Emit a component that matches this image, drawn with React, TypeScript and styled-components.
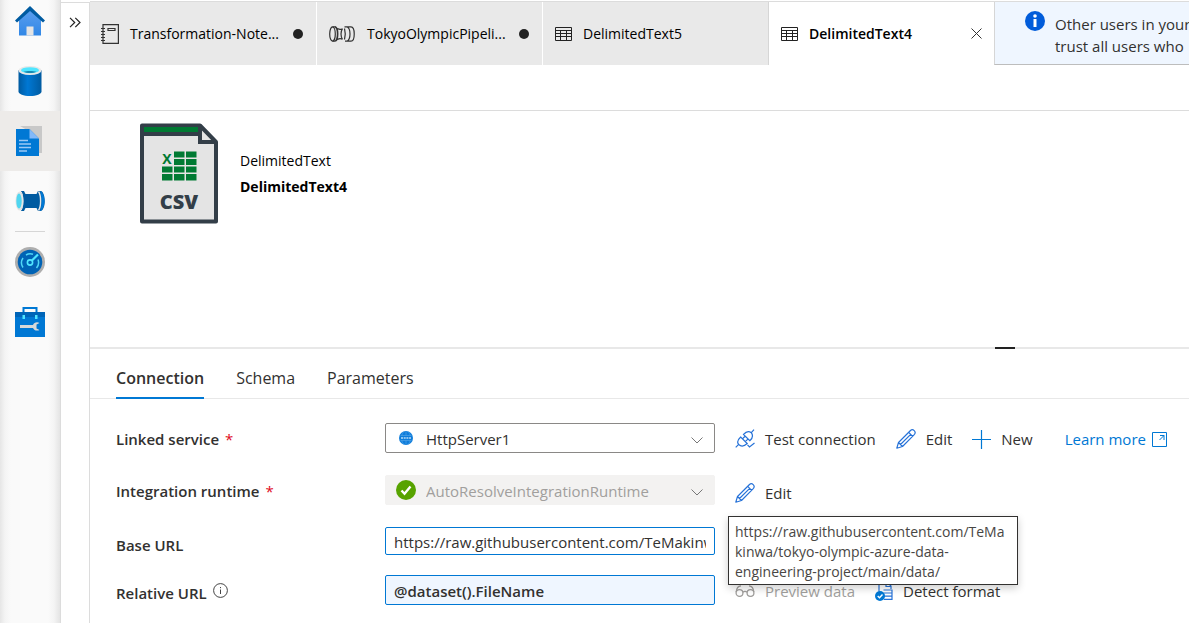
import React from "react";
import styled, { createGlobalStyle, css } from "styled-components";

const GlobalStyle = createGlobalStyle`
  * { box-sizing: border-box; }
  body {
    margin: 0;
    background: #fff;
    color: #323130;
    font-family: "Open Sans", "Noto Sans", sans-serif;
    font-size: 14px;
    line-height: 20px;
  }
  button, input, select { font: inherit; color: inherit; margin: 0; }
  svg { display: block; flex: none; }
`;

const Page = styled.div`
  display: flex;
  min-height: 100vh;
  overflow: hidden;
`;

const Rail = styled.nav`
  flex: 0 0 61px;
  border-right: 1px solid #dcdcdc;
  background: linear-gradient(90deg, #e6e6e6 0, #f4f4f4 5px, #fafafa 11px, #fafafa 48px, #f4f4f4 54px, #e4e4e4 60px);
`;

const RailList = styled.ul`
  list-style: none;
  margin: -9px 0 0;
  padding: 0;
`;

const RailButton = styled.button<{ $active?: boolean }>`
  display: flex;
  align-items: center;
  justify-content: center;
  width: 100%;
  height: 60px;
  padding: 0;
  border: 0;
  background: ${(p) => (p.$active ? "#edebe9" : "transparent")};
`;

const RailDivider = styled.li`
  height: 1px;
  margin: 0 15px;
  background: #d6d6d6;
`;

const Flyout = styled.aside`
  flex: 0 0 29px;
  margin-top: 2px;
  border-top: 1px solid #dcdcdc;
  border-right: 1px solid #dcdcdc;
`;

const ExpandButton = styled.button`
  display: flex;
  justify-content: center;
  width: 100%;
  padding: 14px 0;
  border: 0;
  background: none;
`;

const Main = styled.main`
  flex: 1;
  min-width: 0;
  margin-top: 1px;
  border-top: 1px solid #dcdcdc;
`;

const TabStrip = styled.div`
  display: flex;
  height: 63px;
`;

const FileTab = styled.div<{ $active?: boolean }>`
  flex: 0 0 226px;
  display: flex;
  align-items: center;
  padding: 0 10px;
  color: #000;
  background: ${(p) => (p.$active ? "#fff" : "#e9e9e9")};
  border-left: 1px solid ${(p) => (p.$active ? "#d6d6d6" : "#fff")};
  font-weight: ${(p) => (p.$active ? 600 : 400)};
  &:first-child { border-left: 0; }
`;

const FileTabButton = styled.button`
  flex: 1;
  display: flex;
  align-items: center;
  gap: 10px;
  padding: 0;
  border: 0;
  background: none;
  white-space: nowrap;
`;

const TabGlyph = styled.span<{ $wide?: boolean }>`
  flex: 0 0 ${(p) => (p.$wide ? 30 : 20)}px;
  display: flex;
  justify-content: center;
`;

const UnsavedDot = styled.span`
  width: 10px;
  height: 10px;
  margin-right: 3px;
  border-radius: 50%;
  background: #222;
`;

const CloseButton = styled.button`
  display: flex;
  padding: 2px;
  border: 0;
  background: none;
`;

const Notice = styled.div`
  flex: 1;
  min-width: 0;
  display: flex;
  align-items: flex-start;
  gap: 10px;
  padding: 9px 0 0 30px;
  overflow: hidden;
  background: #eff6ff;
  border-left: 1px solid #d6d6d6;
  border-bottom: 1px solid #bdbdbd;
  font-size: 15px;
  white-space: nowrap;
`;

const NoticeText = styled.p`
  margin: 2px 0 0;
  line-height: 22px;
`;

const CommandBar = styled.div`
  height: 46px;
  border-bottom: 1px solid #dcdcdc;
`;

const Summary = styled.header`
  display: flex;
  align-items: flex-start;
  gap: 22px;
  min-height: 236px;
  padding: 12px 50px;
  color: #000;
`;

const SummaryText = styled.div`
  padding-top: 25px;
  line-height: 26px;
`;

const DatasetName = styled.h1`
  margin: 0;
  font-size: 14px;
  font-weight: 700;
  line-height: 26px;
`;

const Splitter = styled.div`
  display: flex;
  justify-content: flex-end;
  height: 2px;
  padding-right: 174px;
  background: #e8e8e8;
`;

const SplitHandle = styled.button`
  width: 20px;
  height: 2px;
  padding: 0;
  border: 0;
  background: #222;
`;

const SectionTabs = styled.div`
  display: flex;
  gap: 32px;
  height: 50px;
  padding-left: 26px;
  border-bottom: 1px solid #e8e8e8;
`;

const SectionTab = styled.button<{ $active?: boolean }>`
  height: 50px;
  padding: 10px 0 0;
  border: 0;
  border-bottom: 2px solid ${(p) => (p.$active ? "#0078d4" : "transparent")};
  background: none;
  font-size: 16px;
  font-weight: ${(p) => (p.$active ? 600 : 400)};
`;

const Form = styled.form`
  padding: 24px 0 0 26px;
  font-size: 15px;
`;

const Row = styled.div<{ $compact?: boolean }>`
  position: relative;
  display: grid;
  grid-template-columns: 269px 330px 1fr;
  align-items: start;
  min-height: ${(p) => (p.$compact ? 48 : 52)}px;
`;

const Label = styled.label<{ $low?: boolean }>`
  display: flex;
  align-items: center;
  gap: 6px;
  height: 32px;
  margin-top: ${(p) => (p.$low ? 2 : 0)}px;
  font-weight: 600;
`;

const Required = styled.span`
  color: #e00b1c;
  font-weight: 400;
`;

const InfoGlyph = styled.span`
  padding-bottom: 6px;
`;

const SelectBox = styled.div`
  position: relative;
`;

const Select = styled.select`
  appearance: none;
  width: 100%;
  height: 30px;
  padding: 2px 40px 0 40px;
  border: 1px solid #8a8886;
  border-radius: 2px;
  background: #fff;
  &:disabled {
    border-color: #f3f2f1;
    background: #f3f2f1;
    color: #a19f9d;
    opacity: 1;
  }
`;

const glyph = css`
  position: absolute;
  top: 0;
  height: 30px;
  display: flex;
  align-items: center;
  pointer-events: none;
`;

const LeadGlyph = styled.span`
  ${glyph}
  left: 11px;
  width: 20px;
  justify-content: center;
`;

const Chevron = styled.span`
  ${glyph}
  right: 12px;
  padding-top: 4px;
`;

const TextInput = styled.input<{ $expression?: boolean }>`
  width: 100%;
  height: ${(p) => (p.$expression ? 30 : 28)}px;
  padding: 2px 8px 0;
  border: 1px solid #0078d4;
  border-radius: 2px;
  outline: 0;
  background: ${(p) => (p.$expression ? "#eff6ff" : "#fff")};
  font-weight: ${(p) => (p.$expression ? 600 : 400)};
`;

const Actions = styled.div<{ $low?: boolean }>`
  display: flex;
  align-items: center;
  gap: 20px;
  height: 32px;
  margin-top: ${(p) => (p.$low ? 2 : 0)}px;
  padding-left: 20px;
  white-space: nowrap;
`;

const action = css`
  display: flex;
  align-items: center;
  gap: 10px;
  padding: 0;
  border: 0;
  background: none;
`;

const Action = styled.button`
  ${action}
  &:disabled { color: #a19f9d; }
`;

const LearnLink = styled.a`
  ${action}
  gap: 6px;
  margin-left: 12px;
  color: #0078d4;
  text-decoration: none;
`;

const Tooltip = styled.div`
  position: absolute;
  top: -11px;
  left: 612px;
  width: 290px;
  padding: 5px 6px 2px;
  border: 1px solid #323130;
  background: #fff;
  box-shadow: 0 3px 8px rgba(0, 0, 0, 0.2);
  color: #484644;
  font-size: 14px;
  white-space: nowrap;
  z-index: 1;
`;

const HomeIcon = () => (
  <svg width="30" height="30" viewBox="0 0 30 30">
    <defs>
      <linearGradient id="home" x1="0" y1="0" x2="0" y2="1">
        <stop offset="0" stopColor="#5ea0ef" /><stop offset="1" stopColor="#3087e6" />
      </linearGradient>
    </defs>
    <path d="M15 2 4 14v15.5h22V14z" fill="url(#home)" />
    <path d="M15 0 30 14.500 28 16.500 15 5 2 16.500 0 14.500z" fill="#005ba1" />
    <path d="M11.500 20.500h7v9h-7z" fill="#e4e4e4" />
  </svg>
);

const DatabaseIcon = () => (
  <svg width="30" height="30" viewBox="0 0 30 30">
    <defs>
      <linearGradient id="db"><stop offset="0" stopColor="#005ba1" /><stop offset=".4" stopColor="#0078d4" /><stop offset="1" stopColor="#005ba1" /></linearGradient>
    </defs>
    <path d="M3.500 4v21.500c0 2.500 5 4.500 11.500 4.500s11.500-2 11.500-4.500V4z" fill="url(#db)" />
    <ellipse cx="15" cy="4.500" rx="11.500" ry="4.500" fill="#e8e8e8" />
    <ellipse cx="15" cy="4.200" rx="9" ry="3" fill="#50e6ff" />
    <path d="M8.500 5.800c3-1.200 10-1.200 13 0-3 1.600-10 1.600-13 0z" fill="#198ab3" />
  </svg>
);

const DocumentsIcon = () => (
  <svg width="28" height="30" viewBox="0 0 28 30">
    <path d="M4 0h22v27h-8V8z" fill="#c8c8c8" />
    <path d="M0 3h13.500l9.500 9.500V30H0z" fill="#0078d4" />
    <path d="M13.500 3v9.500h9.500z" fill="#83b9f9" />
    <path d="M3 14.500h9M3 18h12M3 21.500h12M3 25h8" stroke="#9cc9f5" strokeWidth="1.300" />
  </svg>
);

const PipelineIcon = () => (
  <svg width="30" height="22" viewBox="0 0 30 22">
    <path d="M6 1h3l1.500 3h11L23 1h3c5 2 5 18 0 20h-3l-1.500-3h-11L9 21H6z" fill="#005ba1" />
    <path d="M25 1c6 2 6 18 0 20 2-5 2-15 0-20z" fill="#0078d4" />
    <ellipse cx="4.500" cy="11" rx="4" ry="9.500" fill="#e4e4e4" />
    <ellipse cx="4" cy="11" rx="2.700" ry="7.500" fill="#50d6f0" />
    <path d="M6 1.500c2.500 3 2.500 16 0 19" fill="none" stroke="#e8e8e8" />
    <path d="M23.500 1.500c2.800 4 2.800 15 0 19" fill="none" stroke="#e8e8e8" strokeWidth="1.400" />
  </svg>
);

const MonitorIcon = () => (
  <svg width="30" height="30" viewBox="0 0 30 30">
    <circle cx="15" cy="15" r="15" fill="#aeaeae" />
    <circle cx="15" cy="15" r="12.300" fill="#0063b5" />
    <path d="M8 20.500a8.500 8.500 0 0 1 0-9.500M11 8a8.500 8.500 0 0 1 7-.7M23 12.500a8.500 8.500 0 0 1-1.500 8.500" fill="none" stroke="#50d6f5" strokeWidth="1.500" />
    <circle cx="15" cy="15.500" r="2.600" fill="none" stroke="#50e6ff" strokeWidth="1.600" />
    <path d="m17 13.500 6-6" stroke="#50e6ff" strokeWidth="2.200" />
  </svg>
);

const ToolboxIcon = () => (
  <svg width="30" height="30" viewBox="0 0 30 30">
    <path d="M8.500 6V1h13v5" fill="none" stroke="#0078d4" strokeWidth="2" />
    <path d="M0 5h30v25H0z" fill="#0078d4" />
    <path d="M0 5h30v5H0z" fill="#0065b8" />
    <path d="M7.500 8h2.500v4H7.500zM20 8h2.500v4H20z" fill="#50e6ff" />
    <path d="M5 18h13c1-2.500 4-3.500 6.500-2l-3 1.500v4l3 1.500c-2.500 1.200-5.500.5-6.500-2H5z" fill="#d8d8d8" />
  </svg>
);

const NotebookIcon = () => (
  <svg width="18" height="20" viewBox="0 0 18 20" fill="none" stroke="#333" strokeWidth="1.200">
    <path d="M2 .6h15.400v18.800H2zM0 4.500h4M0 7.500h4M0 10.500h4M0 13.500h4M0 16.500h4M7 4.500h7v2H7z" />
  </svg>
);

const PipelineOutlineIcon = () => (
  <svg width="26" height="16" viewBox="0 0 26 16" fill="none" stroke="#333" strokeWidth="1.200">
    <ellipse cx="3.500" cy="8" rx="2.800" ry="7.200" />
    <path d="M3.500.8h2.500c3.800 0 3.800 14.400 0 14.400H3.500M6 .8c3.200 2 3.200 12.400 0 14.400M8.500 2.500c1.500 1 3.500 1 5 .2M8.500 13.500c1.500-1 3.500-1 5-.2M13.500 2.700c-2 3-2 7.600 0 10.600M15.500 2.500c1 3.500 1 7.500 0 11M15.500.8h6.500c4.300 0 4.300 14.400 0 14.400h-6M18 .8c4 2 4 12.400 0 14.400" />
  </svg>
);

const TableIcon = () => (
  <svg width="17" height="14" viewBox="0 0 17 14" fill="none" stroke="#222">
    <path d="M.5.5h16v13H.5zM.5 3.500h16M.5 6.500h16M.5 9.500h16M5.500 3.500v10M11.500 3.500v10" />
  </svg>
);

const CsvIcon = () => (
  <svg width="78" height="101" viewBox="0 0 78 101" role="img" aria-label="CSV file">
    <path d="M2 2.500h58L76 19v79.500H2z" fill="#e4e4e4" stroke="#333e48" strokeWidth="4" strokeLinejoin="round" />
    <path d="M4 4h55v5H4z" fill="#007a33" />
    <path d="M3 11h56M60 2.500V19h16" fill="none" stroke="#333e48" strokeWidth="4" />
    <g fill="#007a33">
      <rect x="34" y="28.500" width="10.500" height="6" /><rect x="46" y="28.500" width="10.500" height="6" />
      <rect x="34" y="36" width="10.500" height="6" /><rect x="46" y="36" width="10.500" height="6" />
      <rect x="22" y="43.500" width="10.500" height="6" /><rect x="34" y="43.500" width="10.500" height="6" /><rect x="46" y="43.500" width="10.500" height="6" />
      <rect x="22" y="51" width="10.500" height="6.500" /><rect x="34" y="51" width="10.500" height="6.500" /><rect x="46" y="51" width="10.500" height="6.500" />
    </g>
    <text x="27" y="41" textAnchor="middle" fontSize="14" fontWeight="700" fill="#007a33">X</text>
    <text x="39" y="86" textAnchor="middle" fontSize="20" fontWeight="800" fill="#333e48">CSV</text>
  </svg>
);

const InfoBadge = () => (
  <svg width="20" height="20" viewBox="0 0 20 20">
    <circle cx="10" cy="10" r="10" fill="#015cda" />
    <circle cx="10" cy="5" r="1.800" fill="#fff" />
    <path d="M8.500 8h3v8h-3z" fill="#fff" />
  </svg>
);

const PencilIcon = () => (
  <svg width="20" height="20" viewBox="0 0 20 20" fill="none" stroke="#2672d8" strokeWidth="1.200" strokeLinejoin="round">
    <path d="M.8 19.200 2.500 13.500 14.500 1.500c2.500-2.200 6 1.300 4 3.800L6.500 17.500zM2.500 13.500l4 4M12.700 3.300l4 4M4.500 15.500 14.700 5.300" />
  </svg>
);

const PlugIcon = () => (
  <svg width="20" height="20" viewBox="0 0 20 20" fill="none" stroke="#2672d8" strokeWidth="1.200">
    <path d="m.7 18.300 3-3M3.700 15.500c-2.200-2.500-.8-5 2-7.500l6.500 6.500c-3 2.800-6 3.300-8.500 1zM7.500 9.800l2.300-2.300M10.300 12.600l2.300-2.300M8.500 5.500c2.500-3 5-4 7.800-1.800 2.200 3 1.300 5.500-1.500 8zM16.300 3.700l2.700-3M12.500 15.800l2 2.200 5-4" />
  </svg>
);

const PlusIcon = () => (
  <svg width="19" height="19" viewBox="0 0 19 19" stroke="#0078d4" strokeWidth="1.200">
    <path d="M9.500 0v19M0 9.500h19" />
  </svg>
);

const ExternalIcon = () => (
  <svg width="15" height="15" viewBox="0 0 15 15" fill="none" stroke="#0078d4">
    <path d="M.5.5h14v14H.5zM8 3.500h4V8M12 3.500l-4.500 4.500" />
  </svg>
);

const GlassesIcon = () => (
  <svg width="20" height="12" viewBox="0 0 20 12" fill="none" stroke="#a19f9d" strokeWidth="1.300">
    <circle cx="4.500" cy="8" r="3.400" /><circle cx="15.500" cy="8" r="3.400" />
    <path d="M8 7.200c1-1 3-1 4 0M1.200 7C1.500 3.500 3 1 6 .8M18.800 7C18.500 3.500 17 1 14 .8" />
  </svg>
);

const DetectIcon = () => (
  <svg width="18" height="20" viewBox="0 0 18 20" fill="none" stroke="#2672d8" strokeWidth="1.200">
    <path d="M4 10V.6h7.500L16 5v3M11 .6V5.500h5M8.500 9h8.500v9.400H9M8.500 12h8.500M9 15.200h8" />
    <circle cx="5" cy="15" r="5" fill="#0078d4" stroke="none" />
    <path d="m2.700 15 1.800 1.700 3-3.200" stroke="#fff" strokeWidth="1.400" />
  </svg>
);

const HttpIcon = () => (
  <svg width="14" height="14" viewBox="0 0 14 14">
    <circle cx="7" cy="7" r="7" fill="#0f7ddb" />
    <path d="M1.500 4.500h11M1.500 9.500h11M7 .5v4M7 9.500v4M4.500 1c-1 1-1.500 2-1.700 3.500M9.500 1c1 1 1.500 2 1.700 3.500M4.500 13c-1-1-1.500-2-1.700-3.500M9.500 13c1-1 1.500-2 1.700-3.500" stroke="#5aa9ea" strokeWidth=".6" fill="none" />
    <path d="M2 7h10" stroke="#b9dbf6" strokeWidth="1.600" strokeDasharray="2 .7" />
  </svg>
);

const CheckBadge = () => (
  <svg width="20" height="20" viewBox="0 0 20 20">
    <circle cx="10" cy="10" r="10" fill="#57a300" />
    <path d="m5.500 10.500 3 3.200 6-7.200" fill="none" stroke="#fff" strokeWidth="2.400" />
  </svg>
);

const ChevronIcon = () => (
  <svg width="12" height="7" viewBox="0 0 12 7" fill="none" stroke="#777">
    <path d="m.5.5 5.500 5.500 5.500-5.500" />
  </svg>
);

const InfoOutline = () => (
  <svg width="15" height="15" viewBox="0 0 15 15" fill="none" stroke="#444">
    <circle cx="7.500" cy="7.500" r="6.900" />
    <path d="M7.500 6.500v4.500M7.500 4v1.200" />
  </svg>
);

const railItems = [
  { name: "Home", Icon: HomeIcon },
  { name: "Data", Icon: DatabaseIcon },
  { name: "Develop", Icon: DocumentsIcon, active: true },
  { name: "Integrate", Icon: PipelineIcon },
  { name: "Monitor", Icon: MonitorIcon, divided: true },
  { name: "Manage", Icon: ToolboxIcon },
];

const fileTabs = [
  { name: "Transformation-Note...", Icon: NotebookIcon, unsaved: true },
  { name: "TokyoOlympicPipeli...", Icon: PipelineOutlineIcon, unsaved: true, wide: true },
  { name: "DelimitedText5", Icon: TableIcon },
  { name: "DelimitedText4", Icon: TableIcon, active: true },
];

const sections = ["Connection", "Schema", "Parameters"];
const baseUrl = "https://raw.githubusercontent.com/TeMakinwa/tokyo-olympic-azure-data-engineering-project/main/data/";

export default function App() {
  return (
    <Page>
      <GlobalStyle />
      <Rail>
        <RailList>
          {railItems.map(({ name, Icon, active, divided }) => (
            <React.Fragment key={name}>
              {divided && <RailDivider role="separator" />}
              <li><RailButton aria-label={name} $active={active}><Icon /></RailButton></li>
            </React.Fragment>
          ))}
        </RailList>
      </Rail>
      <Flyout>
        <ExpandButton aria-label="Expand">
          <svg width="12" height="11" viewBox="0 0 12 11" fill="none" stroke="#222" strokeWidth="1.200">
            <path d="m1 .8 4.700 4.700L1 10.200M6.300.8 11 5.500l-4.700 4.700" />
          </svg>
        </ExpandButton>
      </Flyout>
      <Main>
        <TabStrip>
          {fileTabs.map(({ name, Icon, unsaved, wide, active }) => (
            <FileTab key={name} $active={active}>
              <FileTabButton>
                <TabGlyph $wide={wide}><Icon /></TabGlyph>
                {name}
              </FileTabButton>
              {unsaved && <UnsavedDot />}
              {active && (
                <CloseButton aria-label="Close">
                  <svg width="11" height="11" viewBox="0 0 11 11" stroke="#333"><path d="m.5.5 10 10M10.500.5l-10 10" /></svg>
                </CloseButton>
              )}
            </FileTab>
          ))}
          <Notice>
            <InfoBadge />
            <NoticeText>Other users in your<br />trust all users who</NoticeText>
          </Notice>
        </TabStrip>
        <CommandBar />
        <Summary>
          <CsvIcon />
          <SummaryText>
            DelimitedText
            <DatasetName>DelimitedText4</DatasetName>
          </SummaryText>
        </Summary>
        <Splitter><SplitHandle aria-label="Collapse panel" /></Splitter>
        <SectionTabs>
          {sections.map((name, i) => <SectionTab key={name} $active={i === 0}>{name}</SectionTab>)}
        </SectionTabs>
        <Form>
          <Row>
            <Label htmlFor="service">Linked service <Required>*</Required></Label>
            <SelectBox>
              <Select id="service"><option>HttpServer1</option></Select>
              <LeadGlyph><HttpIcon /></LeadGlyph>
              <Chevron><ChevronIcon /></Chevron>
            </SelectBox>
            <Actions>
              <Action type="button"><PlugIcon />Test connection</Action>
              <Action type="button"><PencilIcon />Edit</Action>
              <Action type="button"><PlusIcon />New</Action>
              <LearnLink href="#learn">Learn more<ExternalIcon /></LearnLink>
            </Actions>
          </Row>
          <Row>
            <Label htmlFor="runtime">Integration runtime <Required>*</Required></Label>
            <SelectBox>
              <Select id="runtime" disabled><option>AutoResolveIntegrationRuntime</option></Select>
              <LeadGlyph><CheckBadge /></LeadGlyph>
              <Chevron><ChevronIcon /></Chevron>
            </SelectBox>
            <Actions $low>
              <Action type="button"><PencilIcon />Edit</Action>
            </Actions>
          </Row>
          <Row $compact>
            <Label htmlFor="base" $low>Base URL</Label>
            <TextInput id="base" defaultValue={baseUrl} />
            <Tooltip role="tooltip">
              https://raw.githubusercontent.com/TeMa<br />
              kinwa/tokyo-olympic-azure-data-<br />
              engineering-project/main/data/
            </Tooltip>
          </Row>
          <Row $compact>
            <Label htmlFor="relative" $low>Relative URL <InfoGlyph><InfoOutline /></InfoGlyph></Label>
            <TextInput id="relative" $expression defaultValue="@dataset().FileName" />
            <Actions>
              <Action type="button" disabled><GlassesIcon />Preview data</Action>
              <Action type="button"><DetectIcon />Detect format</Action>
            </Actions>
          </Row>
        </Form>
      </Main>
    </Page>
  );
}
